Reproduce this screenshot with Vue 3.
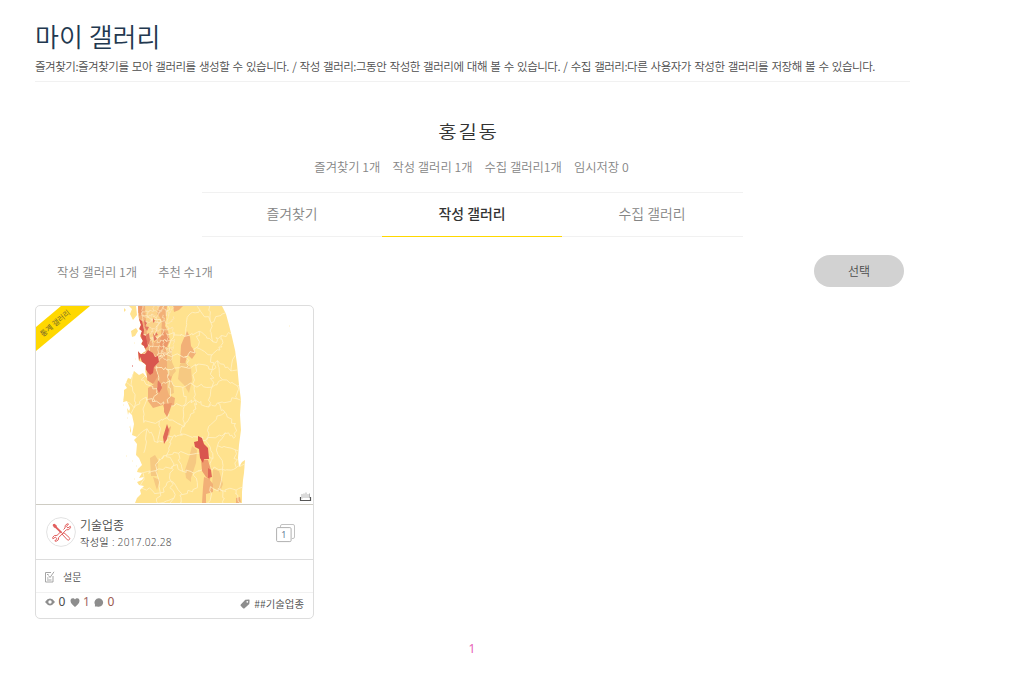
<script setup>
const stats = ['즐겨찾기 1개', '작성 갤러리 1개', '수집 갤러리1개', '임시저장 0']
const tabs = [
  { label: '즐겨찾기', active: false },
  { label: '작성 갤러리', active: true },
  { label: '수집 갤러리', active: false },
]

// District borders: a deterministic jittered honeycomb with wiggly edges.
let seed = 11
const rnd = () => {
  seed = (seed * 16807) % 2147483647
  return seed / 2147483647 - 0.5
}
function borders(x0, y0, x1, y1, w, h, wiggle) {
  const rows = Math.ceil((y1 - y0) / h) + 1
  const cols = Math.ceil((x1 - x0) / w) + 1
  const pts = []
  for (let r = 0; r <= rows; r++) {
    pts.push([])
    for (let c = 0; c <= cols; c++) {
      pts[r].push([x0 + c * w + rnd() * w * 0.7, y0 + r * h + rnd() * h * 0.65 + (c % 2 ? h * 0.25 : 0)])
    }
  }
  let d = ''
  const edge = (a, b) => {
    d += `M${a[0].toFixed(1)} ${a[1].toFixed(1)}`
    for (let i = 1; i < 5; i++) {
      const t = i / 5
      d += `L${(a[0] + (b[0] - a[0]) * t + rnd() * wiggle).toFixed(1)} ${(a[1] + (b[1] - a[1]) * t + rnd() * wiggle).toFixed(1)}`
    }
    d += `L${b[0].toFixed(1)} ${b[1].toFixed(1)}`
  }
  for (let r = 0; r <= rows; r++) {
    for (let c = 0; c <= cols; c++) {
      if (c < cols && rnd() < 0.36) edge(pts[r][c], pts[r][c + 1])
      if (r < rows && ((r + c) % 2 === 0 || rnd() > 0.2)) edge(pts[r][c], pts[r + 1][c])
    }
  }
  return d
}
const wide = borders(118, 298, 250, 506, 13, 17, 4.4)
const dense = borders(143, 304, 165, 350, 5, 6, 2)
</script>

<template>
  <main class="page">
    <header class="head">
      <h1>마이 갤러리</h1>
      <p>즐겨찾기:즐겨찾기를 모아 갤러리를 생성할 수 있습니다. / 작성 갤러리:그동안 작성한 갤러리에 대해 볼 수 있습니다. / 수집 갤러리:다른 사용자가 작성한 갤러리를 저장해 볼 수 있습니다.</p>
    </header>

    <section class="profile">
      <h2>홍길동</h2>
      <ul class="stats">
        <li v-for="s in stats" :key="s">{{ s }}</li>
      </ul>
      <nav class="tabs">
        <a v-for="t in tabs" :key="t.label" :class="{ active: t.active }">{{ t.label }}</a>
      </nav>
    </section>

    <div class="toolbar">
      <span class="count">작성 갤러리 1개</span>
      <span class="count">추천 수1개</span>
      <button type="button">선택</button>
    </div>

    <article class="card">
      <div class="thumb">
        <svg class="map" viewBox="36 306 277 198" width="277" height="198">
          <defs>
            <clipPath id="land">
              <path d="M138 306H222L226 314L229 325L232 337L235 350L237 364L239 385L241 400L240 415L241 430L239 445L238 458L239 467L242 462L245 460L244 473L243 480L242 492L242 503H135L137 498L141 494L140 490L144 486L139 485L137 482L142 480L144 477L139 478L142 473L137 472L138 469L142 465L139 458L136 455L137 444L134 440L137 437L132 435L134 424L132 415L129 412L130 408L127 401L123 402L124 395L124 390L127 388L125 385L128 378L131 379L134 371L139 375L143 373L147 378L150 387L147 377L145 371L146 365L142 362L139 361L138 352L141 354L146 351L144 346L141 344L143 341L140 336L142 331L139 329L141 325L139 319L138 312Z" />
            </clipPath>
          </defs>
          <g clip-path="url(#land)">
            <rect x="118" y="306" width="130" height="197" fill="#ffe28e" />
            <path fill="#f2b077" d="M137 306H167L166 318L165 326L168 331L170 341L166 349L168 360L174 370L171 380L173 387L169 395L175 398L174 405L169 408L168 415L165 412L163 405L153 408L148 401L148 388L154 384L147 380L146 360L140 350L138 330Z" />
            <path fill="#fbd38a" d="M145 306H159L157 313L162 321L161 335L154 343L147 335Z" />
            <path fill="#f6c982" d="M167 346L172 350L172 362L176 371L171 377L167 372L167 359ZM180 364L185 361L191 368L192 380L189 393L184 385L178 379ZM167 379L173 383L174 393L169 395L167 389ZM192 446L197 450L196 463L191 478L191 482L186 478L185 470L189 458ZM150 458L155 455L158 460L157 476L151 476ZM213 469L219 471L223 484L220 492L212 487ZM153 477L160 480L157 490L155 484Z" />
            <path fill="#f2b077" d="M173 306H183L179 310L174 312ZM187 331L190 337L191 346L196 353L192 359L188 355L185 363L180 363L181 345L184 338Z" />
            <path fill="#f2b077" d="M204 477L209 479L213 484L213 492L206 494L206 503H202L203 487ZM236 498L240 497L241 503H236Z" />
            <path fill="#f2b077" d="M167 430L171 426L169 436L168 440Z" />
            <path :d="wide" fill="none" stroke="#fff1c8" stroke-width=".8" />
            <path fill="#ec996b" d="M138 306H142L143 314L139 316ZM164 330L169 339L167 347L160 350L160 339ZM147 370L155 368L158 376L153 384L147 380ZM164 404L172 403L170 410L167 417L164 412Z" />
            <path :d="dense" fill="none" stroke="#fdeac0" stroke-width=".65" />
            <path fill="#e37a61" d="M158 380L161 384L162 388L159 393L157 389ZM146 335L149 333L150 340L149 345L147 342ZM144 326L149 327L147 331ZM153 333L157 339L154 341Z" />
            <path fill="#ee9c6c" d="M201 459L208 460L211 470L210 480L206 477L202 471Z" />
            <path fill="#d9564e" d="M139 319L142 321L144 330L143 338L140 333ZM141 334L146 336L148 346L145 349L142 347ZM138 351L141 354L145 354L148 350L153 353L155 357L158 356L159 362L154 367L153 373L150 375L146 370L145 364L142 362Z" />
            <path fill="#d9564e" d="M194 442L198 441L198 436L202 438L204 444L208 448L209 459L204 459L203 463L200 458L199 449L195 447Z" />
            <path fill="#e06a57" d="M208 468L211 470L212 477L208 478ZM167 424L169 430L167 439L164 444L163 437Z" />
            <path fill="#e3745f" d="M144 320l3 3-2 4zM153 318l2 3-2 2zM156 332l2 3-3 1z" />
          </g>
          <path fill="#ffe28e" d="M129 306H136L137 315L133 320L130 314L132 309ZM124 308l2 2-2 2zM131 331l5-3 2 3-3 5-3 1zM124 395l2 4-2 3zM127 408l2 3-1 4zM130 425l1 6-1 2z" />
          <path fill="#d9564e" d="M138 351l3 4-2 6zM132 365l1 1-1 1z" />
          <path class="islets" d="M134 343h1M135 359h1M123 405h1M127 418h1M129 427h1M126 456h1M132 461h1M136 466h1M134 479h1M289 326h1" />
          <path d="M300.500 497v3.500h10v-3.500" fill="none" stroke="#555" stroke-width="1.200" />
          <path d="M302 494v4.500m2-5v4.500m2-5.500v5.500m2-4v4m1.500-4.500v4.500" fill="none" stroke="#999" stroke-width=".7" />
        </svg>
        <span class="ribbon"><b>통계 갤러리</b></span>
      </div>

      <div class="info">
        <svg class="badge" viewBox="0 0 30 30" width="30" height="30">
          <circle cx="15" cy="15" r="14.400" fill="#fff" stroke="#e2e2e2" />
          <g fill="none" stroke="#e2605f" stroke-linejoin="round">
            <path d="M17.500 12.500 19 11q-.6-3 2.200-4.200l1.300.2-2 2.400 1.400 1.600 2.400-1.700.2 1.400q-1.300 2.800-4.200 2.100l-7.600 7.700q.4 3-2.600 3.800l-1.300-.3 2-2.200-1.400-1.700-2.500 1.700-.2-1.500q1.300-2.600 4.300-1.900l3.100-3" />
            <path d="M16 17 21.300 22.800q1.200.8 2-.2 1-1-.1-2.100L18 15.800z" />
          </g>
          <path d="M7 7.200 8.400 6.800 10.500 8.300 11 10 16.300 15.300 15 16.600 9.600 11.200 8 10.600 6.700 8.500Z" fill="#e2605f" />
        </svg>
        <div class="meta">
          <strong>기술업종</strong>
          <time>작성일 : 2017.02.28</time>
        </div>
        <svg class="pages" viewBox="0 0 20 19" width="20" height="19">
          <path d="M4.500 3.500V2q0-1.500 1.500-1.500h11q1.500 0 1.500 1.500v11q0 1.500-1.500 1.500h-1" fill="none" stroke="#c2c2c2" />
          <rect x=".6" y="3.600" width="14.500" height="14" rx="1.200" fill="#fff" stroke="#b0b0b0" />
          <text x="7.900" y="14.200" text-anchor="middle">1</text>
        </svg>
      </div>

      <div class="kind">
        <svg viewBox="0 0 11 12" width="11" height="12" fill="none" stroke="#a5a5a5">
          <path d="M7 1.500H1.500v9.500h7.500V5" />
          <path d="M4.500 4.500l1.500 2L10 .8M3 3.500h1.500M3 7h1.500M3 9h4.500" />
        </svg>
        <span>설문</span>
      </div>

      <div class="foot">
        <svg viewBox="0 0 10 8" width="10" height="8"><path d="M0 4Q5-2.800 10 4 5 10.800 0 4Z" fill="#8d8d8d" /><circle cx="5" cy="4" r="1.700" fill="#fff" /></svg>
        <i>0</i>
        <svg viewBox="0 0 10 9" width="10" height="9"><path d="M5 9Q.5 5.800.5 2.800C.5-.4 4-.4 5 1.500 6-.4 9.500-.4 9.500 2.800Q9.500 5.800 5 9Z" fill="#8d8d8d" /></svg>
        <i class="like">1</i>
        <svg viewBox="0 0 10 9" width="10" height="9"><path d="M5 .2a4.300 4.300 0 1 1-2 8.200L.9 8.500 1 6.500A4.300 4.300 0 0 1 5 .2Z" fill="#8d8d8d" /></svg>
        <i class="talk">0</i>
        <svg class="tagicon" viewBox="0 0 10 10" width="10" height="10"><path d="M5.300.8 9 .6Q9.700.7 9.600 1.500L9.300 5 4.300 9.400Q3.600 9.800 3 9.200L.7 6.700Q.2 6 .8 5.400Z" fill="#8d8d8d" /><circle cx="7.300" cy="2.800" r=".9" fill="#fff" /></svg>
        <span class="tag">##기술업종</span>
      </div>
    </article>

    <div class="pager">1</div>
  </main>
</template>

<style scoped>
.page {
  box-sizing: border-box;
  width: 910px;
  height: 680px;
  padding-left: 35px;
  overflow: hidden;
  font-family: "Noto Sans CJK KR", sans-serif;
  font-weight: 350;
  color: #4c4c4c;
  background: #fff;
}
.head { box-sizing: border-box; height: 82px; padding-top: 17px; border-bottom: 1px solid #f1f1f1; }
h1 { margin: 0; font-size: 26px; line-height: 38px; font-weight: 350; color: #22384f; white-space: nowrap; }
.head p { margin: 1px 0 0; font-size: 11.500px; line-height: 20px; letter-spacing: -.48px; word-spacing: 1.200px; white-space: nowrap; }
.profile { display: flex; flex-direction: column; align-items: center; height: 155px; }
h2 { margin: 34px 0 0; font-size: 20px; line-height: 30px; font-weight: 350; letter-spacing: 1.700px; color: #333; transform: translateX(-4px) scaleY(.88); }
.stats { display: flex; gap: 12px; margin: 11px 2px 0 0; padding: 0; list-style: none; font-size: 12.300px; line-height: 20px; color: #858585; white-space: nowrap; }
.tabs { box-sizing: border-box; display: flex; width: 541px; height: 45px; margin-top: 15px; border-top: 1px solid #f1f1f1; border-bottom: 1px solid #f1f1f1; }
.tabs a { box-sizing: border-box; width: 180px; height: 44px; font-size: 13.900px; line-height: 41px; text-align: center; color: #858585; }
.tabs a.active { font-weight: 500; color: #333; border-bottom: 1px solid #ffd800; }
.toolbar { display: flex; align-items: center; height: 68px; padding: 0 6px 0 22px; gap: 21px; font-size: 12.300px; color: #858585; }
.count { padding-top: 2px; white-space: nowrap; }
button { width: 90px; height: 32px; margin: 0 0 0 auto; padding: 0; border: 0; border-radius: 16px; background: #d2d2d2; font-family: "Noto Sans CJK KR", sans-serif; font-size: 12px; font-weight: 350; line-height: 32px; color: #4c4c4c; }
.card { box-sizing: border-box; width: 279px; height: 314px; border: 1px solid #ddd; border-radius: 5px; overflow: hidden; }
.thumb { position: relative; height: 198px; border-bottom: 1px solid #ceccc3; }
.map { display: block; }
.islets { stroke: #fff0c4; }
.ribbon { position: absolute; left: 0; top: 0; width: 55px; height: 46px; background: #ffd800; clip-path: polygon(0 21px, 25px 0, 54px 0, 0 45px); }
.ribbon b { position: absolute; left: -11px; top: 10px; width: 60px; font-size: 7.500px; line-height: 14px; font-weight: 400; text-align: center; color: #776a2c; transform: rotate(-40deg); }
.info { box-sizing: border-box; display: flex; height: 55px; padding: 12px 17px 0 10px; border-bottom: 1px solid #ddd; }
.badge { flex: none; }
.meta { display: flex; flex-direction: column; margin: -1px 0 0 4px; white-space: nowrap; }
.meta strong { font-size: 12px; line-height: 17px; font-weight: 350; }
.meta time { margin-top: 1px; font-size: 10.200px; line-height: 17px; letter-spacing: .28px; font-family: "Noto Sans", "Noto Sans CJK KR", sans-serif; }
.pages { margin: 7px 0 0 auto; }
.pages text { font: 9px "Noto Sans", sans-serif; fill: #657a96; }
.kind { box-sizing: border-box; display: flex; align-items: center; gap: 8px; height: 33px; padding: 1px 8px 0; border-bottom: 1px solid #f1f1f1; font-size: 10px; }
.foot { display: flex; align-items: center; height: 18px; padding: 0 9px; }
.foot svg { flex: none; }
.foot i { width: 7px; margin: 0 4px 0 3.500px; font: normal 12px/16px "Noto Sans", sans-serif; }
.foot .like { color: #a26864; }
.foot .talk { color: #9b5a50; }
.foot .tagicon { margin: 4px 4px 0 auto; }
.tag { margin-top: 3px; font-size: 10.400px; line-height: 16px; }
.pager { margin-top: 21px; padding-right: 1px; font: 12px/18px "Noto Sans", sans-serif; color: #e863b5; text-align: center; }
</style>

<style>
body { background: #fff; }
</style>
